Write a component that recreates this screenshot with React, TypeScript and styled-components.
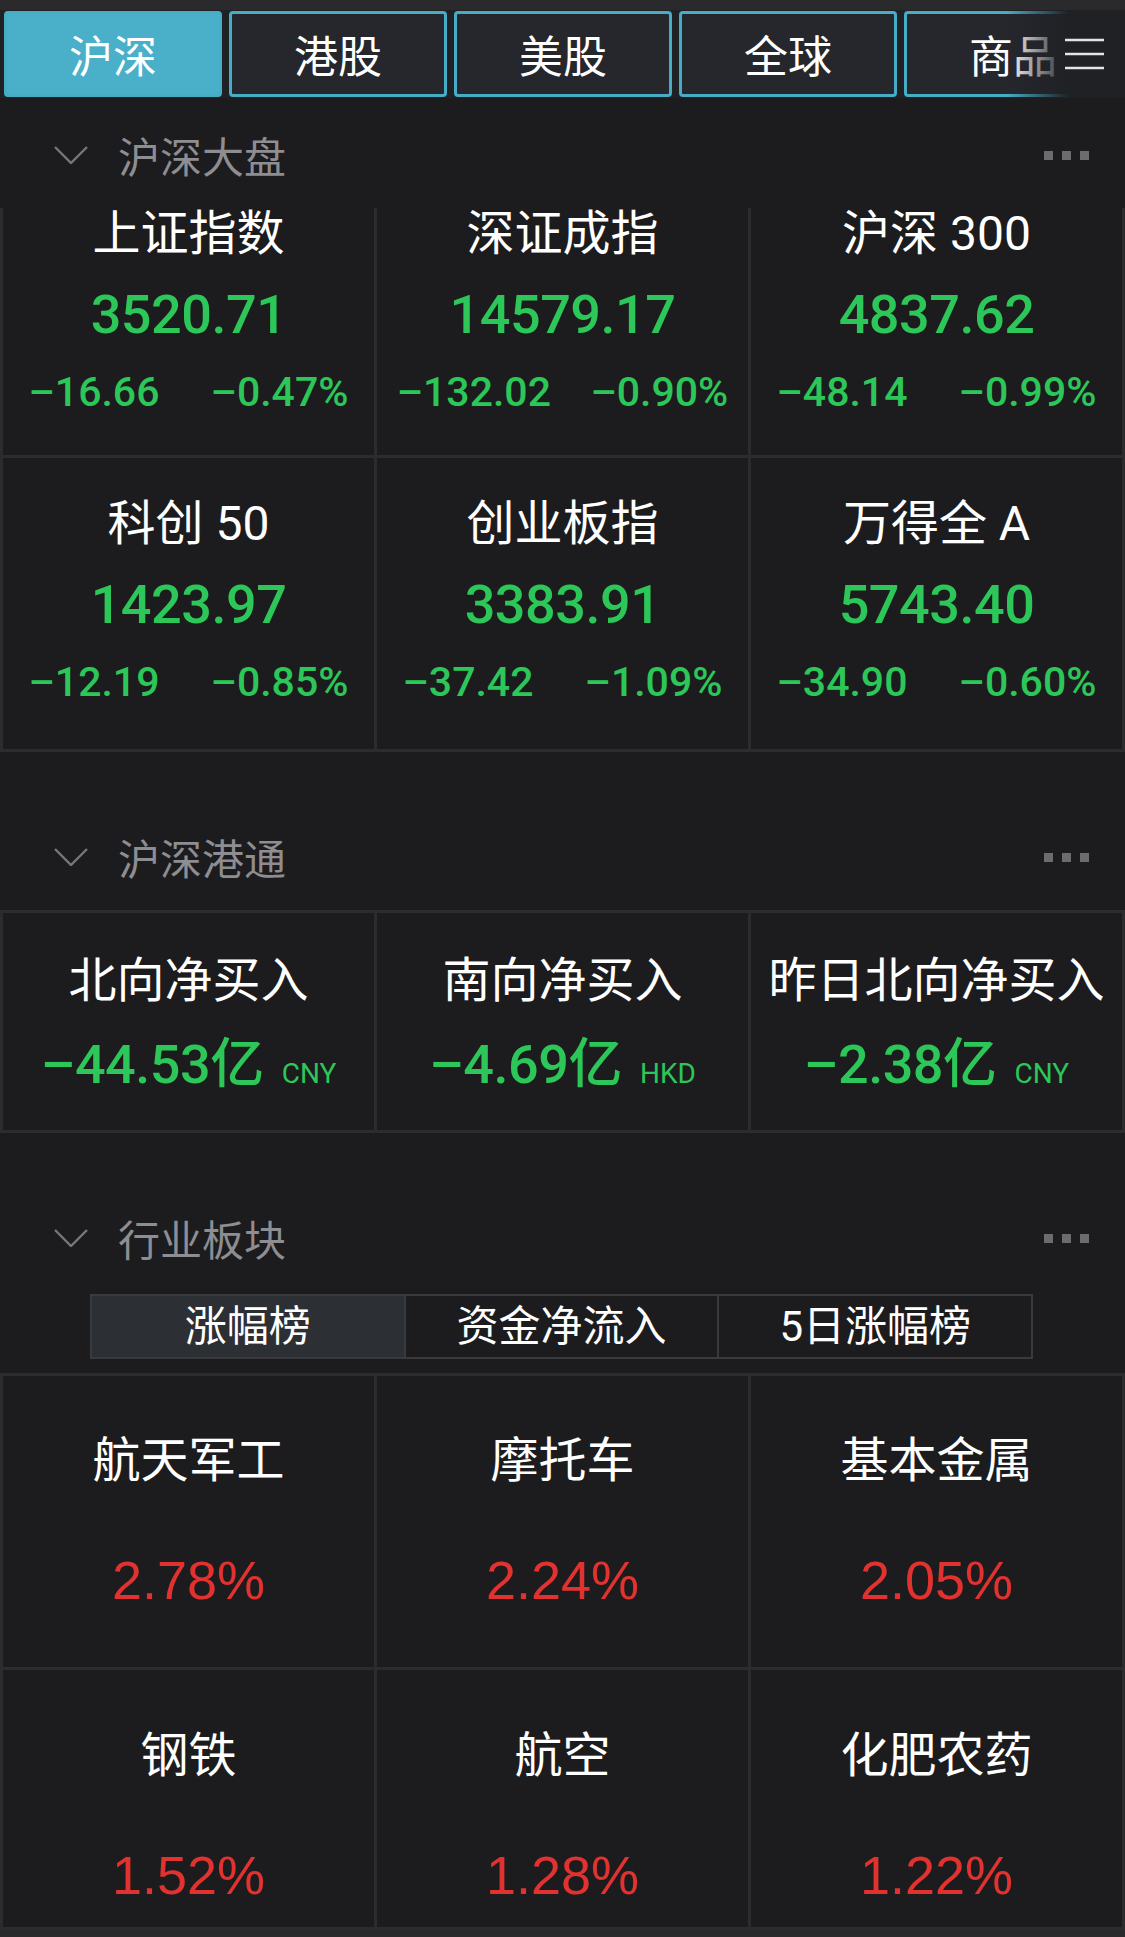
import React from 'react';
import styled, { createGlobalStyle } from 'styled-components';

const GlobalStyle = createGlobalStyle`
  html, body { margin: 0; padding: 0; background: #1c1c1e; }
  body { font-family: Roboto, "Noto Sans CJK SC", sans-serif; -webkit-font-smoothing: antialiased; }
  * { box-sizing: border-box; }
`;

const GREEN = '#2cc659';
const RED = '#e2322f';
const LINE = '#2c2c2e';
const BG = '#1c1c1e';

const Page = styled.div`
  width: 1125px;
  height: 1937px;
  overflow: hidden;
  background: ${BG};
  display: flex;
  flex-direction: column;
`;

const TopStrip = styled.div`
  height: 10px;
  background: #2a292b;
  flex: none;
`;

const TabBar = styled.div`
  position: relative;
  flex: none;
  height: 88px;
  background: #202125;
  display: flex;
  gap: 7px;
  padding: 1px 0 0 4px;
  overflow: hidden;
`;

const Tab = styled.div<{ $active?: boolean }>`
  flex: 0 0 218px;
  height: 86px;
  border-radius: 4px;
  border: 3px solid #47acc5;
  background: ${(p) => (p.$active ? '#4aafc8' : '#25272d')};
  color: #ffffff;
  font-family: "Noto Sans CJK SC", sans-serif;
  font-size: 44px;
  line-height: 1;
  display: flex;
  align-items: center;
  justify-content: center;
`;

const TabFade = styled.div`
  position: absolute;
  top: 0;
  right: 0;
  bottom: 0;
  width: 118px;
  background: linear-gradient(to right, rgba(32, 33, 37, 0) 0%, #202125 52%);
  display: flex;
  align-items: center;
  justify-content: flex-end;
  padding-right: 21px;
`;

const Section = styled.section<{ $first?: boolean }>`
  margin-top: ${(p) => (p.$first ? 0 : 48)}px;
  flex: none;
`;

const Header = styled.div`
  height: 110px;
  padding: 4px 36px 0 54px;
  display: flex;
  align-items: center;
`;

const HeaderTitle = styled.div`
  flex: 1;
  margin-left: 30px;
  font-family: "Noto Sans CJK SC", sans-serif;
  font-size: 42px;
  line-height: 1;
  color: #8d8d92;
`;

const Dots = styled.div`
  display: flex;
  gap: 9px;
`;

const Dot = styled.span`
  width: 9px;
  height: 9px;
  background: #6c6c6f;
`;

const Grid = styled.div<{ $noTop?: boolean }>`
  display: grid;
  grid-template-columns: repeat(3, 1fr);
  gap: 3px;
  background: ${LINE};
  padding: ${(p) => (p.$noTop ? 0 : 3)}px 3px 3px;
`;

const Cell = styled.div<{ $h: number; $pt: number }>`
  height: ${(p) => p.$h}px;
  padding-top: ${(p) => p.$pt}px;
  background: ${BG};
  display: flex;
  flex-direction: column;
  align-items: center;
`;

const Name = styled.div`
  font-size: 48px;
  line-height: 1;
  color: #ffffff;
  white-space: nowrap;
`;

const IndexValue = styled.div`
  margin-top: 30px;
  font-size: 54px;
  line-height: 1;
  font-weight: 500;
  letter-spacing: -0.5px;
  color: ${GREEN};
`;

const ChangeRow = styled.div`
  align-self: stretch;
  margin-top: 30px;
  display: flex;
  justify-content: space-around;
  font-size: 41px;
  line-height: 1;
  font-weight: 500;
  color: ${GREEN};
`;

const FlowValue = styled.div`
  margin-top: 33px;
  display: flex;
  align-items: baseline;
  color: ${GREEN};
  white-space: nowrap;
`;

const FlowNum = styled.span`
  font-size: 54px;
  line-height: 1;
  font-weight: 500;
  letter-spacing: -0.5px;
`;

const FlowUnit = styled.span`
  margin-left: 18px;
  font-size: 28px;
  line-height: 1;
`;

const Pct = styled.div`
  margin-top: 68px;
  font-family: "Liberation Sans", Arial, sans-serif;
  font-size: 54px;
  line-height: 1;
  color: ${RED};
`;

const SegWrap = styled.div`
  display: flex;
  height: 65px;
  margin: 3px 92px 14px 90px;
  border: 2px solid #3a3a3c;
`;

const Seg = styled.div<{ $active?: boolean }>`
  flex: 1;
  display: flex;
  align-items: center;
  justify-content: center;
  background: ${(p) => (p.$active ? '#2c2f33' : 'transparent')};
  color: #ffffff;
  font-size: 42px;
  line-height: 1;
  & + & {
    border-left: 2px solid #3a3a3c;
  }
`;

const BottomBar = styled.div`
  flex: none;
  height: 10px;
  background: #2a2a2c;
`;

const Chevron = () => (
  <svg width="34" height="18" viewBox="0 0 34 18" fill="none">
    <polyline points="1,1 17,17 33,1" stroke="#77777b" strokeWidth="2.4" />
  </svg>
);

const Hamburger = () => (
  <svg width="39" height="32" viewBox="0 0 39 32" fill="none">
    <line x1="0" y1="2" x2="39" y2="2" stroke="#e4e4e4" strokeWidth="2.6" />
    <line x1="0" y1="16" x2="39" y2="16" stroke="#e4e4e4" strokeWidth="2.6" />
    <line x1="0" y1="30" x2="39" y2="30" stroke="#e4e4e4" strokeWidth="2.6" />
  </svg>
);

const SectionHeader = ({ title }: { title: string }) => (
  <Header>
    <Chevron />
    <HeaderTitle>{title}</HeaderTitle>
    <Dots>
      <Dot />
      <Dot />
      <Dot />
    </Dots>
  </Header>
);

const tabs = ['沪深', '港股', '美股', '全球', '商品'];

const indices = [
  { name: '上证指数', value: '3520.71', chg: '–16.66', pct: '–0.47%' },
  { name: '深证成指', value: '14579.17', chg: '–132.02', pct: '–0.90%' },
  { name: '沪深 300', value: '4837.62', chg: '–48.14', pct: '–0.99%' },
  { name: '科创 50', value: '1423.97', chg: '–12.19', pct: '–0.85%' },
  { name: '创业板指', value: '3383.91', chg: '–37.42', pct: '–1.09%' },
  { name: '万得全 A', value: '5743.40', chg: '–34.90', pct: '–0.60%' },
];

const flows = [
  { name: '北向净买入', value: '–44.53亿', unit: 'CNY' },
  { name: '南向净买入', value: '–4.69亿', unit: 'HKD' },
  { name: '昨日北向净买入', value: '–2.38亿', unit: 'CNY' },
];

const sectors = [
  { name: '航天军工', pct: '2.78%' },
  { name: '摩托车', pct: '2.24%' },
  { name: '基本金属', pct: '2.05%' },
  { name: '钢铁', pct: '1.52%' },
  { name: '航空', pct: '1.28%' },
  { name: '化肥农药', pct: '1.22%' },
];

export default function App() {
  return (
    <Page>
      <GlobalStyle />
      <TopStrip />
      <TabBar>
        {tabs.map((t, i) => (
          <Tab key={t} $active={i === 0}>
            {t}
          </Tab>
        ))}
        <TabFade>
          <Hamburger />
        </TabFade>
      </TabBar>

      <Section $first>
        <SectionHeader title="沪深大盘" />
        <Grid $noTop>
          {indices.map((it, i) => (
            <Cell key={it.name} $h={i < 3 ? 247 : 291} $pt={i < 3 ? 2 : 42}>
              <Name>{it.name}</Name>
              <IndexValue>{it.value}</IndexValue>
              <ChangeRow>
                <span>{it.chg}</span>
                <span>{it.pct}</span>
              </ChangeRow>
            </Cell>
          ))}
        </Grid>
      </Section>

      <Section>
        <SectionHeader title="沪深港通" />
        <Grid>
          {flows.map((f) => (
            <Cell key={f.name} $h={217} $pt={44}>
              <Name>{f.name}</Name>
              <FlowValue>
                <FlowNum>{f.value}</FlowNum>
                <FlowUnit>{f.unit}</FlowUnit>
              </FlowValue>
            </Cell>
          ))}
        </Grid>
      </Section>

      <Section>
        <SectionHeader title="行业板块" />
        <SegWrap>
          <Seg $active>涨幅榜</Seg>
          <Seg>资金净流入</Seg>
          <Seg>5日涨幅榜</Seg>
        </SegWrap>
        <Grid>
          {sectors.map((s, i) => (
            <Cell key={s.name} $h={i < 3 ? 291 : 257} $pt={i < 3 ? 61 : 62}>
              <Name>{s.name}</Name>
              <Pct>{s.pct}</Pct>
            </Cell>
          ))}
        </Grid>
      </Section>
      <BottomBar />
    </Page>
  );
}
